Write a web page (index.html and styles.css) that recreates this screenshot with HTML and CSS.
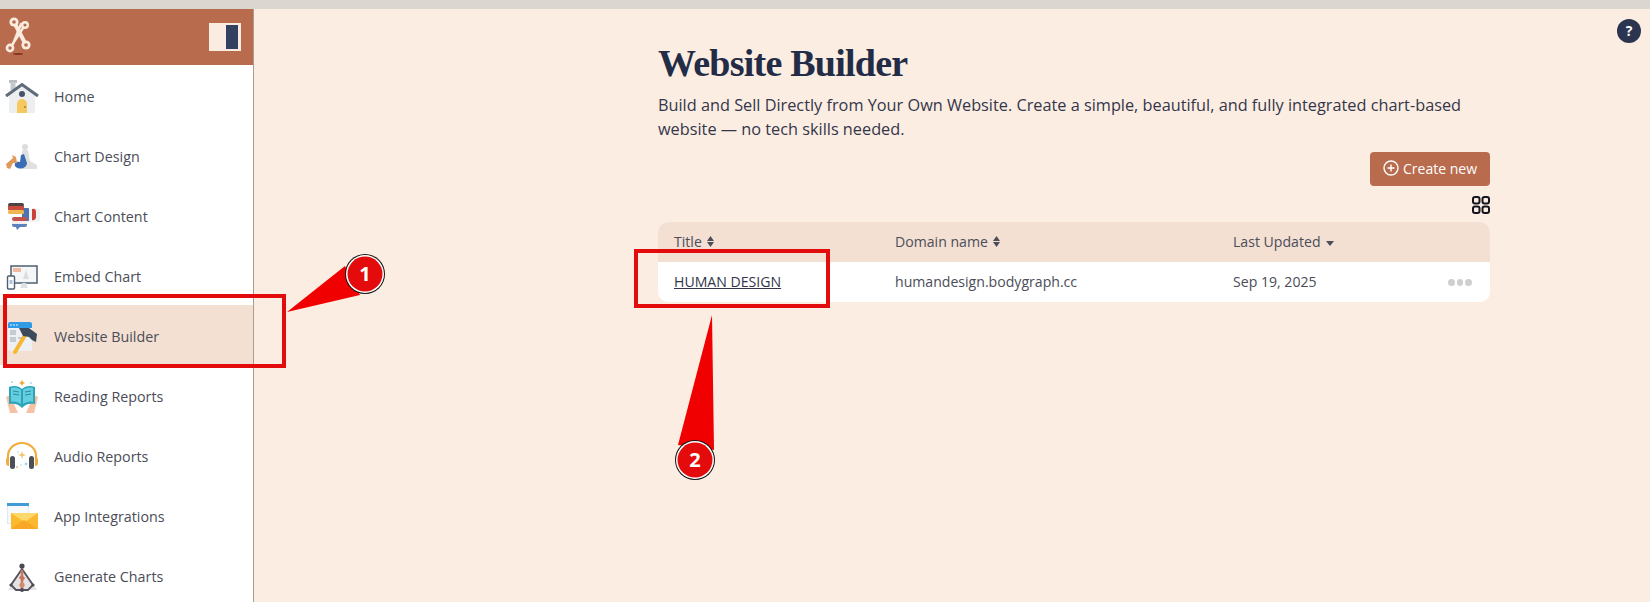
FILE: index.html
```html
<!DOCTYPE html>
<html lang="en">
<head>
    <meta charset="UTF-8">
    <meta name="viewport" content="width=device-width, initial-scale=1.0">
    <title>Website Builder</title>
    <link rel="stylesheet" href="styles.css">
</head>
<body>

    <div class="browser-strip"></div>

    <div class="app">

        <!-- Sidebar -->
        <aside class="sidebar">
            <div class="sidebar-head">
                <svg class="logo" width="36" height="50" viewBox="0 0 36 50">
                    <g stroke="#f9ebdd" stroke-linecap="round" fill="none">
                        <path d="M14 10 L26 33" stroke-width="4"/>
                        <path d="M25 13 L10 36 M21 12 L13 32" stroke-width="2.4"/>
                    </g>
                    <g fill="#f9ebdd">
                        <circle cx="14" cy="10" r="4.6"/>
                        <circle cx="25" cy="13" r="4"/>
                        <circle cx="10" cy="36" r="4.4"/>
                        <circle cx="26" cy="33" r="4.6"/>
                    </g>
                    <g fill="#b96b4d">
                        <circle cx="14" cy="10" r="1.8"/>
                        <circle cx="25" cy="13" r="1.6"/>
                        <circle cx="10" cy="36" r="1.7"/>
                        <circle cx="26" cy="33" r="1.8"/>
                    </g>
                    <ellipse cx="18" cy="42" rx="5" ry="1" fill="#8a3320"/>
                </svg>
                <div class="toggle"><span></span></div>
            </div>

            <a class="nav-item" href="#">
                <svg class="nav-icon" viewBox="0 0 36 36">
                    <rect x="5" y="1" width="8" height="3" fill="#b9bcc0"/>
                    <rect x="6.5" y="3" width="5" height="8" fill="#c6c9cc"/>
                    <path d="M5 14 L18 5 L31 14 V34 H5 Z" fill="#eceef0"/>
                    <path d="M2 17 L18 5.5 L34 17" fill="none" stroke="#5d6b7a" stroke-width="3"/>
                    <circle cx="18" cy="15" r="3" fill="#44546a"/>
                    <path d="M13 34 V25 a5 5 0 0 1 10 0 V34 Z" fill="#f6c95f"/>
                    <circle cx="21" cy="28" r=".8" fill="#6a4a10"/>
                </svg>
                Home
            </a>
            <a class="nav-item" href="#">
                <svg class="nav-icon" viewBox="0 0 36 36">
                    <circle cx="21" cy="8" r="3" fill="#dcdcdc"/>
                    <path d="M18 11 H24 L26 22 L33 26 L33 30 H18 Z" fill="#e0e0e0"/>
                    <path d="M11 27 C10 23 13 22 16 23 L17 16 L20 15 L23 24 C23 29 15 32 11 27 Z" fill="#3a6db5"/>
                    <path d="M2 25 L9 19 L8 16 L12 18 L13 24 L9 24 L6 30 L3 29 Z" fill="#dd9a5c"/>
                </svg>
                Chart Design
            </a>
            <a class="nav-item" href="#">
                <svg class="nav-icon" viewBox="0 0 36 36">
                    <path d="M22 10 H36 V21 a2 2 0 0 1 -2 2 H23 Z" fill="#f2f2f2"/>
                    <rect x="18" y="9" width="7" height="13" rx="1" fill="#4e73b3"/>
                    <path d="M28 10 a3 3 0 0 1 4 2 V18 a3 3 0 0 1 -4 3 Z" fill="#c8413b"/>
                    <rect x="4" y="4" width="16" height="4" rx="2" fill="#4d4341"/>
                    <rect x="4" y="7" width="16" height="4" fill="#c94b3c"/>
                    <rect x="4" y="11" width="16" height="4" rx="1.5" fill="#eeb752"/>
                    <rect x="8" y="18" width="15" height="4" rx="2" fill="#c5504a"/>
                    <rect x="8" y="22" width="15" height="3" fill="#f4efee"/>
                    <path d="M8 25 H23 V26 a2 2 0 0 1 -2 2 H16 L13 31 L12 28 H10 a2 2 0 0 1 -2 -2 Z" fill="#5c82bd"/>
                </svg>
                Chart Content
            </a>
            <a class="nav-item" href="#">
                <svg class="nav-icon" viewBox="0 0 36 36">
                    <rect x="7" y="7" width="26" height="17" fill="#f4f6f8" stroke="#4f5f70" stroke-width="1.5"/>
                    <rect x="9" y="9" width="8" height="4" fill="#f2b9a1"/>
                    <path d="M19 20 L22 11 L25 20 Z" fill="#d8dee2"/>
                    <path d="M18 24 H22 L24 29 H16 Z" fill="#dde2e6"/>
                    <rect x="3.5" y="17" width="7" height="13" rx="1" fill="#fff" stroke="#4f5f70" stroke-width="1.4"/>
                    <rect x="5.5" y="21" width="3" height="4" fill="#a9c4de"/>
                </svg>
                Embed Chart
            </a>
            <a class="nav-item active" href="#">
                <svg class="nav-icon" viewBox="0 0 36 36">
                    <rect x="4" y="3" width="24" height="29" rx="2" fill="#eef0f3"/>
                    <path d="M4 9 V5 a2 2 0 0 1 2 -2 H26 a2 2 0 0 1 2 2 V9 Z" fill="#2f9ae6"/>
                    <circle cx="7" cy="6" r=".8" fill="#fff"/>
                    <circle cx="10" cy="6" r=".8" fill="#fff"/>
                    <circle cx="13" cy="6" r=".8" fill="#fff"/>
                    <rect x="6" y="11" width="6" height="5" fill="#c3cbd5"/>
                    <rect x="6" y="18" width="6" height="5" fill="#c3cbd5"/>
                    <rect x="14" y="18" width="5" height="2" fill="#c3cbd5"/>
                    <path d="M20 18 L11 33" stroke="#f7b733" stroke-width="4" stroke-linecap="round"/>
                    <path d="M15 9 H25 L33 15 L32 23 L28 21 L25 18 L19 17 Z" fill="#3c4b5c"/>
                </svg>
                Website Builder
            </a>
            <a class="nav-item" href="#">
                <svg class="nav-icon" viewBox="0 0 36 36">
                    <path d="M2 18 L6 34 H14 L10 25 L6 16 Z" fill="#f7c2a4"/>
                    <path d="M34 18 L30 34 H22 L26 25 L30 16 Z" fill="#f7c2a4"/>
                    <path d="M5 8 C10 6 15 7 18 10 C21 7 26 6 31 8 V25 C26 24 21 25 18 29 C15 25 10 24 5 25 Z" fill="#2ea3b8"/>
                    <path d="M7 9 C11 8 15 9 17 11 V25 C14 23 10 22 7 23 Z M29 9 C25 8 21 9 19 11 V25 C22 23 26 22 29 23 Z" fill="#63cfe0"/>
                    <path d="M9 12 L15 13 M9 15 L15 16 M21 13 L27 12 M21 16 L27 15" stroke="#2a8aa0" stroke-width="1"/>
                    <path d="M18 1 L19 3 L21 4 L19 5 L18 7 L17 5 L15 4 L17 3 Z" fill="#f2a33a"/>
                    <circle cx="8" cy="3" r="1" fill="#a7d8e6"/>
                    <circle cx="27" cy="4" r="1" fill="#a7d8e6"/>
                </svg>
                Reading Reports
            </a>
            <a class="nav-item" href="#">
                <svg class="nav-icon" viewBox="0 0 36 36">
                    <path d="M4 22 V17 a14 13 0 0 1 28 0 V22" fill="none" stroke="#f2ac3c" stroke-width="2.2"/>
                    <path d="M5 18 a3 3 0 0 0 -3 3 v3 a3 3 0 0 0 3 3 Z M31 18 a3 3 0 0 1 3 3 v3 a3 3 0 0 1 -3 3 Z" fill="#f2ac3c"/>
                    <rect x="6" y="17" width="5" height="13" rx="2.5" fill="#4a4f58"/>
                    <rect x="25" y="17" width="5" height="13" rx="2.5" fill="#4a4f58"/>
                    <path d="M18 12 L19 15 L22 16 L19 17 L18 20 L17 17 L14 16 L17 15 Z" fill="#f2c56a"/>
                    <circle cx="13" cy="28" r="1" fill="#e8b88f"/>
                    <circle cx="22" cy="25" r="1.4" fill="#a7d3e6"/>
                    <circle cx="14" cy="13" r=".8" fill="#a7d3e6"/>
                    <circle cx="17" cy="26" r=".8" fill="#a7d3e6"/>
                </svg>
                Audio Reports
            </a>
            <a class="nav-item" href="#">
                <svg class="nav-icon" viewBox="0 0 36 36">
                    <rect x="3.5" y="4.5" width="21" height="20" fill="#f6f9fb" stroke="#e2e8ee"/>
                    <rect x="3" y="4" width="22" height="3" fill="#3f9ad6"/>
                    <rect x="7" y="14" width="27" height="16" fill="#fbb92f"/>
                    <path d="M7 14 H34 L20.5 23 Z" fill="#fdd86a"/>
                    <path d="M7 30 L20 21 L34 30 Z" fill="#f9a825"/>
                </svg>
                App Integrations
            </a>
            <a class="nav-item" href="#">
                <svg class="nav-icon" viewBox="0 0 36 36">
                    <path d="M18 8 L33 31 H4 Z" fill="#e4e2e3"/>
                    <path d="M18 10 L7 26 L12 31 H24 L29 26 Z" fill="none" stroke="#55505a" stroke-width="1.8"/>
                    <circle cx="18" cy="7" r="2.6" fill="#4a4a55"/>
                    <path d="M18 11 V30" stroke="#c77b62" stroke-width="2.5"/>
                    <rect x="15.5" y="17" width="5" height="4" fill="#c9745c" transform="rotate(45 18 19)"/>
                    <circle cx="18" cy="26" r="2.6" fill="#d58a6c"/>
                    <circle cx="18" cy="31" r="2" fill="#4a4a55"/>
                    <circle cx="7" cy="26" r="1.6" fill="#4a4a55"/>
                    <circle cx="29" cy="26" r="1.6" fill="#4a4a55"/>
                </svg>
                Generate Charts
            </a>
        </aside>

        <!-- Main content -->
        <main class="main">
            <h1>Website Builder</h1>
            <p class="intro">Build and Sell Directly from Your Own Website. Create a simple, beautiful, and fully integrated chart-based website — no tech skills needed.</p>

            <div class="actions">
                <button class="btn-create">
                    <svg width="16" height="16" viewBox="0 0 16 16" fill="none" stroke="#fff" stroke-width="1.4">
                        <circle cx="8" cy="8" r="7"/>
                        <path d="M8 4.5 V11.5 M4.5 8 H11.5"/>
                    </svg>
                    Create new
                </button>
                <svg class="grid-icon" width="18" height="18" viewBox="0 0 18 18" fill="none" stroke="#14141c" stroke-width="2">
                    <rect x="1" y="1" width="6.5" height="6.5" rx="2"/>
                    <rect x="10.5" y="1" width="6.5" height="6.5" rx="2"/>
                    <rect x="1" y="10.5" width="6.5" height="6.5" rx="2"/>
                    <rect x="10.5" y="10.5" width="6.5" height="6.5" rx="2"/>
                </svg>
            </div>

            <div class="table">
                <div class="table-row table-head">
                    <div class="cell">Title
                        <svg class="sort" width="7" height="11" viewBox="0 0 7 11"><path d="M3.5 0 L7 5 H0 Z M0 6 H7 L3.5 11 Z"/></svg>
                    </div>
                    <div class="cell">Domain name
                        <svg class="sort" width="7" height="11" viewBox="0 0 7 11"><path d="M3.5 0 L7 5 H0 Z M0 6 H7 L3.5 11 Z"/></svg>
                    </div>
                    <div class="cell">Last Updated
                        <svg class="sort sort-down" width="8" height="5" viewBox="0 0 8 5"><path d="M0 0 H8 L4 5 Z"/></svg>
                    </div>
                    <div></div>
                </div>
                <div class="table-row">
                    <div class="cell"><a href="#" class="site-link">HUMAN DESIGN</a></div>
                    <div class="cell">humandesign.bodygraph.cc</div>
                    <div class="cell">Sep 19, 2025</div>
                    <div class="dots"><span></span><span></span><span></span></div>
                </div>
            </div>
        </main>
    </div>

    <!-- Help button -->
    <div class="help">?</div>

    <!-- Red annotations over the page -->
    <svg class="annotations" width="1650" height="602" viewBox="0 0 1650 602">
        <rect x="5" y="296" width="279" height="70" fill="none" stroke="#e20c0c" stroke-width="4"/>
        <rect x="636" y="251" width="192" height="55" fill="none" stroke="#e20c0c" stroke-width="4"/>
        <polygon points="287,312 345,266 360,295" fill="#f00000"/>
        <polygon points="712,315 678,445 714,450" fill="#f00000"/>
        <g>
            <circle cx="365" cy="274" r="20" fill="#111"/>
            <circle cx="365" cy="274" r="19" fill="#fff"/>
            <circle cx="365" cy="274" r="17.5" fill="#e30b0b"/>
            <text x="365" y="281" class="badge-num">1</text>
        </g>
        <g>
            <circle cx="695" cy="460" r="20" fill="#111"/>
            <circle cx="695" cy="460" r="19" fill="#fff"/>
            <circle cx="695" cy="460" r="17.5" fill="#e30b0b"/>
            <text x="695" y="467" class="badge-num">2</text>
        </g>
    </svg>

</body>
</html>
```

FILE: styles.css
```css
/* General Body Styling */
html, body {
    height: 100%;
}

body {
    margin: 0;
    font-family: 'Open Sans', sans-serif;
    font-size: 14px;
    color: #4b4d58;
    background: #fcede2;
    overflow: hidden;
    position: relative;
}

a {
    color: inherit;
    text-decoration: none;
}

.browser-strip {
    height: 9px;
    background: #dcd6d0;
}

.app {
    display: flex;
    height: 593px;
}

/* Sidebar */
.sidebar {
    width: 253px;
    flex-shrink: 0;
    background: #fff;
    border-right: 1px solid #a99c92;
}

.sidebar-head {
    height: 56px;
    background: #b96b4d;
    display: flex;
    align-items: center;
    justify-content: space-between;
    padding-right: 12px;
}

.logo {
    display: block;
}

.toggle {
    width: 32px;
    height: 28px;
    background: #fbece1;
    display: flex;
    justify-content: flex-end;
    align-items: center;
    padding-right: 3px;
    box-sizing: border-box;
}

.toggle span {
    width: 12px;
    height: 24px;
    background: #34405f;
}

.nav-item {
    display: flex;
    align-items: center;
    height: 60px;
    box-sizing: border-box;
    padding: 2px 0 0 4px;
    font-size: 14.3px;
}

.nav-item.active {
    background: #f3e0d3;
}

.nav-icon {
    width: 36px;
    height: 36px;
    margin: 2px 14px 0 0;
    flex-shrink: 0;
}

/* Main content */
.main {
    flex: 1;
    padding: 31px 160px 0 404px;
    color: #33364a;
}

h1 {
    margin: 0;
    font-family: 'Liberation Serif', serif;
    font-weight: bold;
    font-size: 38px;
    line-height: 46px;
    letter-spacing: -0.75px;
    color: #232c46;
}

.intro {
    margin: 7px 0 0;
    font-size: 16.3px;
    line-height: 24px;
}

.actions {
    display: flex;
    flex-direction: column;
    align-items: flex-end;
    margin-top: 11px;
}

.btn-create {
    display: flex;
    align-items: center;
    justify-content: center;
    gap: 4px;
    width: 120px;
    height: 34px;
    padding: 0 0 2px;
    border: none;
    border-radius: 4px;
    background: #b96b4d;
    color: #fff;
    font-family: inherit;
    font-size: 14px;
    cursor: pointer;
}

.grid-icon {
    display: block;
    margin-top: 10px;
}

/* Table */
.table {
    margin-top: 8px;
    border-radius: 10px;
    overflow: hidden;
    background: #fff;
    font-size: 14.1px;
    color: #4b4d58;
}

.table-row {
    display: grid;
    grid-template-columns: 221px 338px 1fr 24px;
    align-items: center;
    height: 40px;
    box-sizing: border-box;
    padding: 0 18px 2px 16px;
}

.table-head {
    background: #f3e0d3;
}

.cell {
    display: flex;
    align-items: center;
    gap: 5px;
}

.sort {
    fill: #4b4d58;
    margin-top: 1px;
}

.sort-down {
    margin-top: 5px;
}

.site-link {
    text-decoration: underline;
    color: #33364a;
}

.dots {
    display: flex;
    gap: 2px;
    margin-top: 2px;
}

.dots span {
    width: 7px;
    height: 7px;
    border-radius: 50%;
    background: #cfcfcf;
}

/* Help button */
.help {
    position: absolute;
    top: 19px;
    right: 9px;
    width: 24px;
    height: 24px;
    border-radius: 50%;
    background: #2c3550;
    color: #fff;
    font-weight: bold;
    font-size: 14px;
    line-height: 24px;
    text-align: center;
}

/* Annotations */
.annotations {
    position: absolute;
    top: 0;
    left: 0;
    pointer-events: none;
}

.badge-num {
    fill: #fff;
    font-family: 'Open Sans', sans-serif;
    font-weight: bold;
    font-size: 20px;
    text-anchor: middle;
}
```
